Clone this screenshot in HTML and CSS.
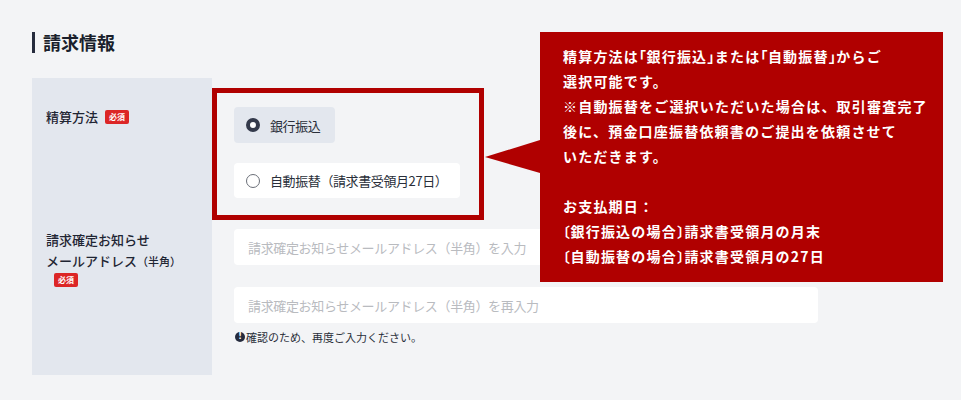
FILE: index.html
```html
<!DOCTYPE html>
<html lang="ja">
<head>
<meta charset="utf-8">
<title>請求情報</title>
<link rel="stylesheet" href="styles.css">
</head>
<body>
<section class="section">
  <h2 class="title">請求情報</h2>
  <div class="form">
    <div class="label">
      <div class="label-row"><span class="label-text">精算方法</span><span class="badge">必須</span></div>
    </div>
    <div class="field">
      <div class="radio-group">
        <label class="radio checked"><span class="circle"></span><span class="radio-text">銀行振込</span></label>
        <label class="radio"><span class="circle"></span><span class="radio-text">自動振替（請求書受領月27日）</span></label>
      </div>
    </div>
    <div class="label label-2">
      <div class="label-text">請求確定お知らせ<br>メールアドレス<span class="small">（半角）</span></div>
      <span class="badge badge-block">必須</span>
    </div>
    <div class="field field-2">
      <div class="input"><span class="placeholder">請求確定お知らせメールアドレス（半角）を入力</span></div>
      <div class="input input-2"><span class="placeholder">請求確定お知らせメールアドレス（半角）を再入力</span></div>
      <p class="note"><span class="note-icon">!</span>確認のため、再度ご入力ください。</p>
    </div>
  </div>
  <div class="tooltip">
    精算方法は<span class="br">「</span>銀行振込<span class="br">」</span>または<span class="br">「</span>自動振替<span class="br">」</span>からご<br>
    選択可能です。<br>
    ※自動振替をご選択いただいた場合は、取引審査完了<br>
    後に、預金口座振替依頼書のご提出を依頼させて<br>
    いただきます。<br>
    <br>
    お支払期日：<br>
    <span class="br">〔</span>銀行振込の場合<span class="br">〕</span>請求書受領月の月末<br>
    <span class="br">〔</span>自動振替の場合<span class="br">〕</span>請求書受領月の27日
  </div>
</section>
</body>
</html>
```
FILE: styles.css
```css
* { box-sizing: border-box; }
*::before, *::after { box-sizing: border-box; }
html, body {
  margin: 0;
  padding: 0;
  background: #f3f4f6;
  font-family: "Noto Sans CJK JP", "Noto Sans", sans-serif;
  color: #1f2533;
}
.section {
  position: relative;
  padding: 32px 0 0 32px;
}
.title {
  margin: 0 0 25px;
  font-size: 18px;
  line-height: 21px;
  font-weight: 700;
  border-left: 3px solid #252b3d;
  padding-left: 8px;
  color: #1a1f2c;
}
.form {
  display: grid;
  grid-template-columns: 180px 628px;
  grid-template-rows: auto auto;
}
.label {
  background: #e3e7ee;
  padding: 29px 14px 0 14px;
  font-size: 13px;
  line-height: 20px;
  font-weight: 500;
}
.label-row {
  display: flex;
  align-items: center;
  height: 20px;
}
.label-text { color: #1f2533; }
.label-2 {
  padding-top: 31px;
  line-height: 21px;
}
.small { font-size: 11px; }
.badge {
  display: inline-block;
  margin-left: 7px;
  background: #dc2626;
  color: #fff;
  font-size: 8px;
  font-weight: 700;
  line-height: 14px;
  height: 14px;
  padding: 0 4px;
  border-radius: 2px;
}
.badge-block {
  display: block;
  width: max-content;
  margin-left: 8px;
  margin-top: 1px;
}
.field {
  padding: 29px 22px 0 22px;
}
.field-2 {
  padding-top: 31px;
  padding-bottom: 31px;
}
.radio-group {
  position: relative;
  display: flex;
  flex-direction: column;
  align-items: flex-start;
  gap: 20px;
}
.radio-group::before {
  content: "";
  position: absolute;
  left: -22px;
  top: -19px;
  width: 272px;
  height: 132px;
  border: 5px solid #b00000;
  pointer-events: none;
}
.radio {
  display: flex;
  align-items: center;
  gap: 10px;
  height: 36px;
  padding: 0 13px 0 12px;
  border-radius: 4px;
  background: #fff;
  font-size: 13px;
  color: #2a2f3a;
}
.radio-text { letter-spacing: -0.4px; }
.radio.checked { background: #e3e7ee; padding-right: 15px; }
.radio + .radio { height: 35px; }
.circle {
  width: 14px;
  height: 14px;
  border-radius: 50%;
  border: 1px solid #6b6f78;
  background: #fff;
}
.checked .circle {
  border: 4px solid #343a4b;
}
.input {
  height: 36px;
  background: #fff;
  border-radius: 4px;
  padding: 0 14px;
  display: flex;
  align-items: center;
}
.input-2 { margin-top: 22px; }
.placeholder {
  font-size: 13px;
  letter-spacing: -0.35px;
  color: #b9bbbf;
  white-space: nowrap;
}
.note {
  margin: 7px 0 0 1px;
  font-size: 11px;
  line-height: 14px;
  color: #2a2f3a;
  display: flex;
  align-items: center;
}
.note-icon {
  width: 10px;
  height: 10px;
  border-radius: 50%;
  background: #252b3d;
  color: #fff;
  font-size: 8px;
  font-weight: 700;
  line-height: 10px;
  text-align: center;
  margin-right: 1px;
  font-family: "DejaVu Sans", sans-serif;
}
.tooltip {
  position: absolute;
  left: 540px;
  top: 32px;
  width: 403px;
  height: 250px;
  background: #b00000;
  color: #fff;
  font-size: 14px;
  letter-spacing: 1.2px;
  line-height: 25px;
  font-weight: 700;
  padding: 12px 10px 0 23px;
  white-space: nowrap;
}
.br {
  font-feature-settings: "halt";
  letter-spacing: 0.5px;
}
.tooltip::before {
  content: "";
  position: absolute;
  left: -55px;
  top: 108px;
  border-style: solid;
  border-width: 17px 55px 16px 0;
  border-color: transparent #b00000 transparent transparent;
}
```
